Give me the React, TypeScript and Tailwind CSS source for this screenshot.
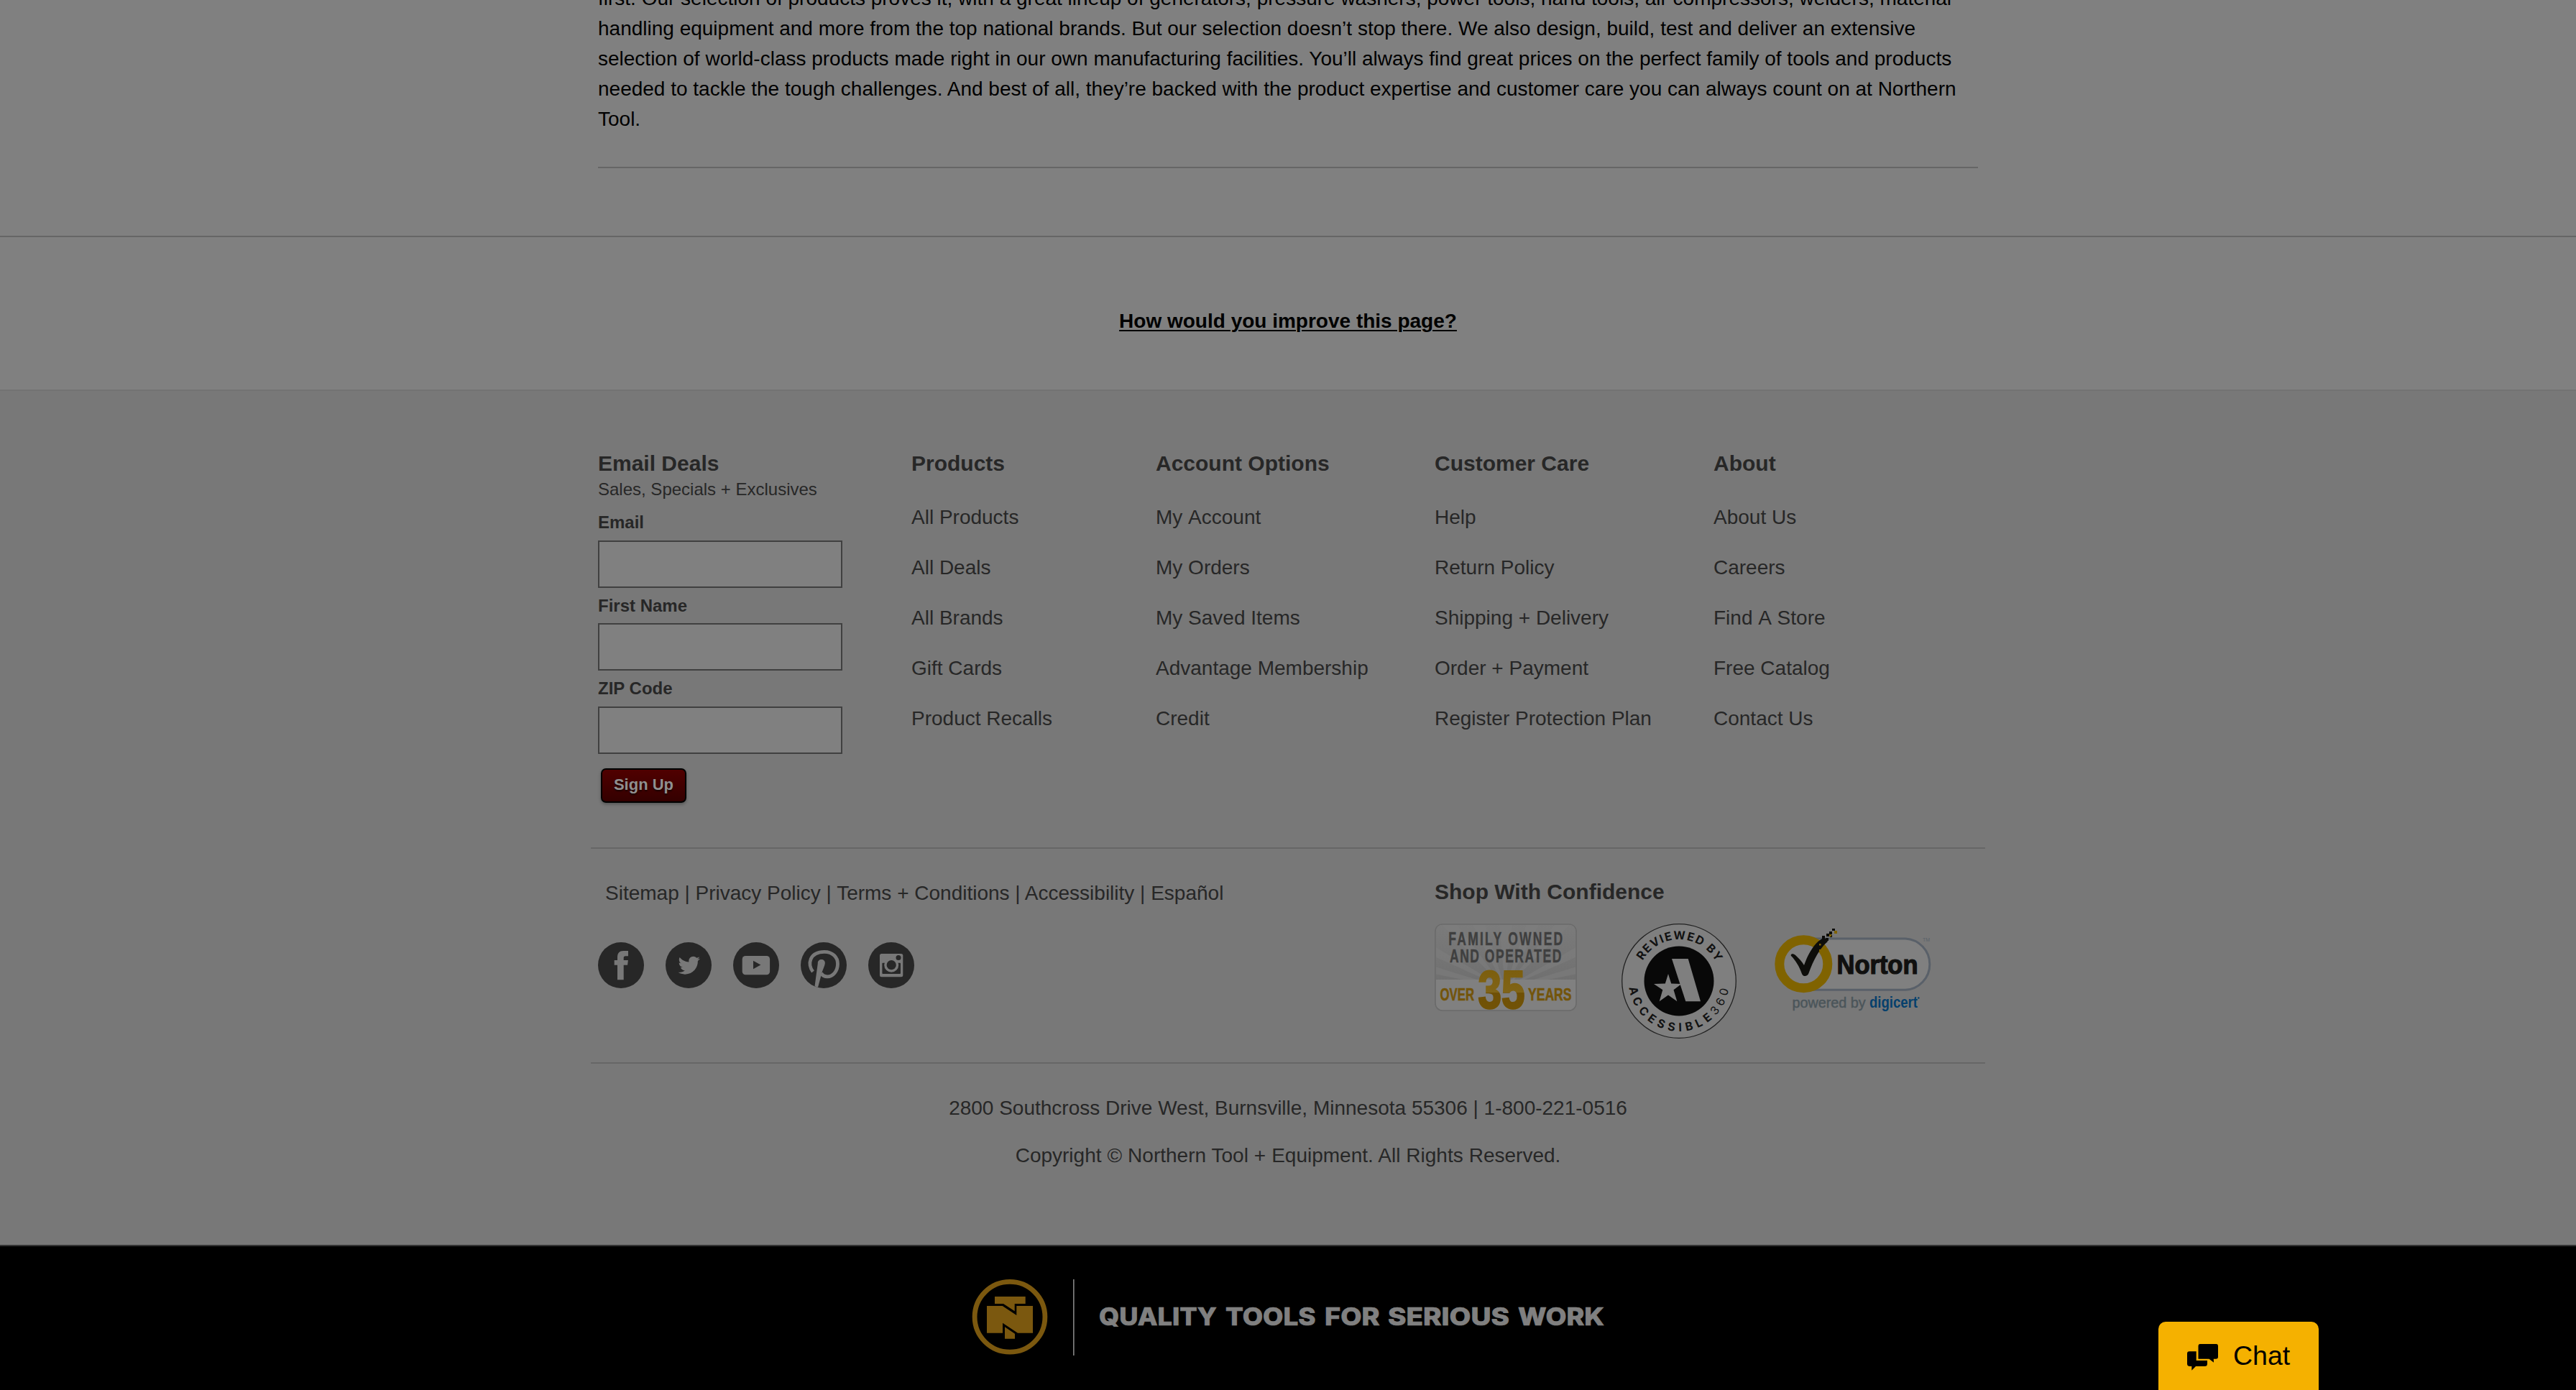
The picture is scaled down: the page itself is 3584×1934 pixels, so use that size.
import React from "react";

const columns = [
  {
    title: "Products",
    width: "w-[340px]",
    links: ["All Products", "All Deals", "All Brands", "Gift Cards", "Product Recalls"],
  },
  {
    title: "Account Options",
    width: "w-[388px]",
    links: ["My Account", "My Orders", "My Saved Items", "Advantage Membership", "Credit"],
  },
  {
    title: "Customer Care",
    width: "w-[388px]",
    links: ["Help", "Return Policy", "Shipping + Delivery", "Order + Payment", "Register Protection Plan"],
  },
  {
    title: "About",
    width: "w-[300px]",
    links: ["About Us", "Careers", "Find A Store", "Free Catalog", "Contact Us"],
  },
];

const slogan = [
  { word: "QUALITY", x: 9, length: 164 },
  { word: "TOOLS", x: 185, length: 125.5 },
  { word: "FOR", x: 323, length: 76.500 },
  { word: "SERIOUS", x: 411, length: 169 },
  { word: "WORK", x: 592, length: 120 },
];

function Field({ label, className, gap }: { label: string; className: string; gap: string }) {
  return (
    <label className={`block text-2xl leading-[28px] font-bold ${className}`}>
      {label}
      <input className={`block h-[66px] w-[340px] border-2 border-[#404040] bg-[#808080] ${gap}`} />
    </label>
  );
}

function SocialIcon({ label, children }: { label: string; children: React.ReactNode }) {
  return (
    <a aria-label={label} className="block size-16">
      <svg viewBox="0 0 64 64" className="size-16">
        <circle cx="32" cy="32" r="32" fill="#272727" />
        {children}
      </svg>
    </a>
  );
}

function SocialIcons() {
  return (
    <div className="mt-[47px] flex gap-[30px]">
      <SocialIcon label="Facebook">
        <path
          fill="#787878"
          d="M42 12v7.2h-3.6c-2.1 0-2.7 1-2.7 2.8v3h6.2l-.8 6.7h-5.4v20.6H27V31.7h-4.3V25H27v-4c0-6 3-9 8.300-9z"
        />
      </SocialIcon>
      <SocialIcon label="Twitter">
        <svg x="17.500" y="17" width="30.500" height="30.500" viewBox="0 0 512 512">
          <path
            fill="#787878"
            d="M459.370 151.716c.325 4.548.325 9.097.325 13.645 0 138.720-105.583 298.558-298.558 298.558-59.452 0-114.680-17.219-161.137-47.106 8.447.974 16.568 1.299 25.340 1.299 49.055 0 94.213-16.568 130.274-44.832-46.132-.975-84.792-31.188-98.112-72.772 6.498.974 12.995 1.624 19.818 1.624 9.421 0 18.843-1.300 27.614-3.573-48.081-9.747-84.143-51.980-84.143-102.985v-1.299c13.969 7.797 30.214 12.670 47.431 13.319-28.264-18.843-46.781-51.005-46.781-87.391 0-19.492 5.197-37.360 14.294-52.954 51.655 63.675 129.300 105.258 216.365 109.807-1.624-7.797-2.599-15.918-2.599-24.040 0-57.828 46.782-104.934 104.934-104.934 30.213 0 57.502 12.670 76.670 33.137 23.715-4.548 46.456-13.320 66.599-25.340-7.798 24.366-24.366 44.833-46.132 57.827 21.117-2.273 41.584-8.122 60.426-16.243-14.292 20.791-32.161 39.308-52.628 54.253z"
          />
        </svg>
      </SocialIcon>
      <SocialIcon label="YouTube">
        <rect x="12.700" y="19" width="38.400" height="26.200" rx="4.500" fill="#787878" />
        <path d="M28 25.700v11.600l10.400-5.800z" fill="#272727" />
      </SocialIcon>
      <SocialIcon label="Pinterest">
        <path
          d="M17 41C9 31 12 13.300 33 13.300c11.500 0 18.500 7.500 18.500 16.700 0 10-6.500 17.800-14.500 17.800-4.500 0-7-2-8.500-4.800"
          fill="none"
          stroke="#787878"
          strokeWidth="4.800"
        />
        <path d="M23.800 29.500c-.8-7.500 11-7.500 10 0-.4 4-3.600 9.500-5 15.500L24 62.800l-4.500-1.500z" fill="#787878" />
      </SocialIcon>
      <SocialIcon label="Instagram">
        <rect x="16" y="16" width="32.300" height="32.300" rx="2.500" fill="#787878" />
        <rect x="19.400" y="28.700" width="25.600" height="15.300" rx="1" fill="#272727" />
        <circle cx="32.200" cy="31.700" r="10" fill="#787878" />
        <circle cx="32.200" cy="31.700" r="6.600" fill="#272727" />
        <circle cx="42" cy="21.400" r="3.500" fill="#272727" />
      </SocialIcon>
    </div>
  );
}

function YearsBadge() {
  return (
    <svg viewBox="0 0 198 122" className="h-[122px] w-[198px] shrink-0 overflow-visible font-['Liberation_Sans_Narrow','Liberation_Sans',Arial,sans-serif] font-bold">
      <defs>
        <linearGradient id="panel" x1="0" y1="0" x2="0" y2="1">
          <stop offset="0" stopColor="#7b7b7b" />
          <stop offset="1" stopColor="#707070" />
        </linearGradient>
        <linearGradient id="gold" x1="0" y1="0" x2="0" y2="1">
          <stop offset="0" stopColor="#7a5b08" />
          <stop offset=".55" stopColor="#806418" />
          <stop offset=".56" stopColor="#6f5006" />
          <stop offset="1" stopColor="#735406" />
        </linearGradient>
        <clipPath id="badgeTop">
          <path d="M2 78V11q0-9 9-9h176q9 0 9 9v67z" />
        </clipPath>
      </defs>
      <rect x="1" y="1" width="196" height="120" rx="10" fill="#808080" stroke="#6a6a6a" strokeWidth="1.600" />
      <g clipPath="url(#badgeTop)">
        <rect width="198" height="78" fill="url(#panel)" />
        <path
          fill="#7d7d7d"
          opacity=".6"
          d="M98 90L0 70V60zM98 90L0 46V32zM98 90L8 0H30zM98 90L52 0H70zM98 90L90 0H108zM98 90L128 0H146zM98 90L168 0H190zM98 90L198 32V46zM98 90L198 60V70z"
        />
      </g>
      <g fontSize="25" fill="#3f3f3f" stroke="#3f3f3f" strokeWidth=".5" transform="scale(.7 1)">
        <text x="27.600" y="29.700" textLength="227">FAMILY OWNED</text>
        <text x="30" y="54.300" textLength="222">AND OPERATED</text>
      </g>
      <text
        x="60.500"
        y="117.500"
        fontSize="75"
        fill="url(#gold)"
        stroke="url(#gold)"
        strokeWidth="2.600"
        textLength="65"
        lengthAdjust="spacingAndGlyphs"
      >
        35
      </text>
      <g fontSize="24.500" fill="#73540a" stroke="#73540a" strokeWidth=".6">
        <text x="7.500" y="107" textLength="47.500" lengthAdjust="spacingAndGlyphs">OVER</text>
        <text x="130" y="107" textLength="60.500" lengthAdjust="spacingAndGlyphs">YEARS</text>
      </g>
    </svg>
  );
}

function AccessibleSeal() {
  return (
    <svg viewBox="36 25 160 160" className="ml-[62px] size-[160px] shrink-0 font-[Inter,sans-serif] font-bold">
      <defs>
        <path id="sealTop" d="M58 105A58 58 0 0 1 174 105" />
        <path id="sealBottom" d="M46 105A70 70 0 0 0 186 105" />
      </defs>
      <circle cx="116" cy="105" r="79.300" fill="#7f7f7f" stroke="#222" strokeWidth="1.300" />
      <circle cx="116" cy="105" r="48.500" fill="#080808" />
      <path fill="#7f7f7f" d="M106 74h22.700L146 133.300h-20.700z" />
      <path fill="#7f7f7f" d="M101 95l4.200 13.500 14.300.5-11 8.300 4.800 15.900-12.300-8.600-12.300 8.600 4.600-15.900L81 109l15.800-.5z" />
      <g fontSize="16" fill="#111">
        <text>
          <textPath href="#sealTop" startOffset="29.500" textLength="125">REVIEWED BY</textPath>
        </text>
        <text>
          <textPath href="#sealBottom" startOffset="9" textLength="199">
            ACCESSIBLE<tspan className="font-normal">360</tspan>
          </textPath>
        </text>
      </g>
    </svg>
  );
}

function NortonSeal() {
  return (
    <svg viewBox="28 30 221 120" className="mt-[5px] ml-[52px] h-[120px] w-[221px] shrink-0 font-['Liberation_Sans',Arial,sans-serif]">
      <path d="M69 46h142a35.700 35.700 0 0 1 0 71.300H69z" fill="#808080" stroke="#596069" strokeWidth="3" />
      <circle cx="69.300" cy="81.300" r="33.500" fill="#808080" stroke="#806300" strokeWidth="13" />
      <path
        fill="#0d0d0a"
        d="M52 70c-1.500-3 3-4 6-1 5 4.500 9 9 12 14 5-14 11-25 20-33.500l8-5.500 5 6c-11 9-20 26-26.500 44-1.500 5-8 5.500-9.500 1C63 84 58 76 52 70z"
      />
      <path fill="#0d0d0a" d="M95 42h4v4h-4zM100 45h4v4h-4zM101 39h4v4h-4zM105 36h4v4h-4zM106 41h3v3h-3zM109 32h4v3h-4z" />
      <path fill="#806300" d="M112 35h4v4h-4zM105 40h3v3h-3zM91 53h2.500v2.500H91zM97 57h2.500v2.500H97zM91 61h2.500v2.500H91z" />
      <text x="115.500" y="94.600" fontSize="36" fontWeight="700" fill="#10100f" stroke="#10100f" strokeWidth="1.200" textLength="113" lengthAdjust="spacingAndGlyphs">
        Norton
      </text>
      <text x="235" y="50" fontSize="7" fill="#596069">TM</text>
      <text x="53.500" y="142.300" fontSize="21" fill="#4b555a" stroke="#4b555a" strokeWidth=".5" textLength="102" lengthAdjust="spacingAndGlyphs">
        powered by
      </text>
      <text x="161" y="142.300" fontSize="22" fontWeight="700" fill="#06406c" textLength="67" lengthAdjust="spacingAndGlyphs">
        digicert
      </text>
      <circle cx="229.300" cy="128.500" r="1.300" fill="#06406c" />
    </svg>
  );
}

function NorthernMark() {
  return (
    <svg viewBox="12 10 106 106" className="size-[106px] shrink-0">
      <g fill="#7b580f">
        <circle cx="65" cy="62.300" r="48.900" fill="none" stroke="#7b580f" strokeWidth="6.800" />
        <path d="M44 34h42.700v10H71.700v10.300L56 44H44z" />
        <path d="M33 47h21.700l19.600 13V47H97v37.700H76l-21-14v14H33z" />
        <path d="M58 76.300l14 9.400v7H58z" />
      </g>
    </svg>
  );
}

export default function App() {
  return (
    <div className="relative h-[1934px] w-[3584px] overflow-hidden bg-[#808080] font-['Liberation_Sans',Arial,sans-serif] text-[28px] text-black">
      <div className="h-[330px] overflow-hidden border-b-2 border-[#666]">
        <div className="ml-[832px] flex h-[234px] w-[1920px] items-end border-b-2 border-[#666] pb-[45px]">
          <p className="leading-[42px] whitespace-nowrap">
            first. Our selection of products proves it, with a great lineup of generators, pressure washers, power tools, hand tools, air compressors, welders, material
            <br />
            handling equipment and more from the top national brands. But our selection doesn’t stop there. We also design, build, test and deliver an extensive
            <br />
            selection of world-class products made right in our own manufacturing facilities. You’ll always find great prices on the perfect family of tools and products
            <br />
            needed to tackle the tough challenges. And best of all, they’re backed with the product expertise and customer care you can always count on at Northern
            <br />
            Tool.
          </p>
        </div>
      </div>

      <div className="flex h-[212px] justify-center pt-[96px]">
        <a className="leading-[42px] font-bold underline decoration-2 underline-offset-[3px]">How would you improve this page?</a>
      </div>

      <footer className="h-[1190px] border-t-2 border-[#727272] bg-[#787878] text-[#272727]">
        <div className="ml-[822px] flex h-[637px] w-[1940px] border-b-2 border-[#666] pt-[84px] pl-[10px]">
          <form className="w-[436px]">
            <h3 className="text-3xl leading-[34px] font-bold">Email Deals</h3>
            <p className="mt-[5px] text-2xl leading-[28px]">Sales, Specials + Exclusives</p>
            <Field label="Email" className="mt-[18px]" gap="mt-[11px]" />
            <Field label="First Name" className="mt-[11px]" gap="mt-[10px]" />
            <Field label="ZIP Code" className="mt-[11px]" gap="mt-[11px]" />
            <button
              type="button"
              className="mt-[20px] ml-[4px] flex h-[48px] w-[119px] items-center justify-center rounded-[7px] border-2 border-black bg-linear-to-b from-[#500000] to-[#340000] pb-[4px] text-[22px] font-bold text-[#909090] shadow-[0_2px_4px_rgba(0,0,0,0.3)] [text-shadow:0_2px_2px_rgba(0,0,0,0.6)]"
            >
              Sign Up
            </button>
          </form>
          {columns.map((column) => (
            <nav key={column.title} className={column.width}>
              <h3 className="text-3xl leading-[34px] font-bold">{column.title}</h3>
              <ul className="mt-[23px]">
                {column.links.map((link) => (
                  <li
                    key={link}
                    className={`h-[70px] leading-[70px] whitespace-nowrap ${link.includes(" A") ? "[word-spacing:1.5px]" : ""}`}
                  >
                    {link}
                  </li>
                ))}
              </ul>
            </nav>
          ))}
        </div>

        <div className="ml-[822px] flex h-[299px] w-[1940px] border-b-2 border-[#666] pl-[10px]">
          <div className="w-[1164px] pt-[41px]">
            <p className="pl-[10px] leading-[42px]">
              Sitemap | Privacy Policy | Terms + Conditions | <a>Accessibility</a> | Español
            </p>
            <SocialIcons />
          </div>
          <div className="pt-[43px]">
            <h3 className="text-3xl leading-[34px] font-bold">Shop With Confidence</h3>
            <div className="mt-[27px] flex items-start">
              <YearsBadge />
              <AccessibleSeal />
              <NortonSeal />
            </div>
          </div>
        </div>

        <div className="pt-[29px] text-center leading-[66px]">
          <p>2800 Southcross Drive West, Burnsville, Minnesota 55306 | 1-800-221-0516</p>
          <p className="[word-spacing:0.2px]">Copyright © Northern Tool + Equipment. All Rights Reserved.</p>
        </div>
      </footer>

      <div className="flex h-[202px] border-t-2 border-[#333] bg-black pt-[46px] pl-[1352px]">
        <NorthernMark />
        <div className="ml-[35px] h-[106px] w-[2px] border-l border-[#808080] bg-[#555]" />
        <svg viewBox="0 0 740 106" className="ml-[25px] h-[106px] w-[740px] font-[Inter,sans-serif]">
          <g fontSize="34.500" fontWeight="800" fill="#808080" stroke="#808080" strokeWidth=".7">
            {slogan.map(({ word, x, length }) => (
              <text key={word} x={x} y="64.200" textLength={length} lengthAdjust="spacingAndGlyphs">
                {word}
              </text>
            ))}
          </g>
        </svg>
      </div>

      <button type="button" className="absolute bottom-0 left-[3003px] flex h-[95px] w-[223px] items-start rounded-t-[10px] bg-[#f5b100] pt-[25px] pl-[39px]">
        <svg viewBox="82 69 46 40" className="mt-[5px] h-[40px] w-[46px]">
          <path d="M101 70h22.500q2.500 0 2.500 3v15q0 2.700-3 2.700h-3.200l.2 5-6.500-5H98.500V73q0-3 2.500-3z" />
          <path d="M86 80.300h9.700V93H111v4.500q0 3.500-3.500 3.500H95l-5.700 5.700V101H86q-3-.5-3-3.500V83.300q0-3 3-3z" />
        </svg>
        <span className="ml-[19px] text-[37.5px] leading-[44px]">Chat</span>
      </button>
    </div>
  );
}
